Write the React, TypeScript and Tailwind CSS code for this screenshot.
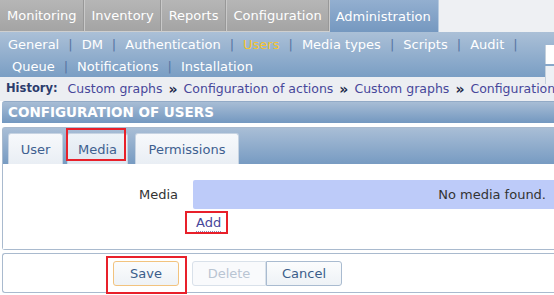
import React from "react";

const TOP = ["Monitoring", "Inventory", "Reports", "Configuration"];
const SUB1 = ["General", "DM", "Authentication", "Users", "Media types", "Scripts", "Audit"];
const SUB2 = ["Queue", "Notifications", "Installation"];
const HISTORY = ["Custom graphs", "Configuration of actions", "Custom graphs", "Configuration of users"];

export default function App() {
  return (
    <div
      className="relative w-[554px] h-[295px] overflow-hidden bg-white text-[13px] leading-none"
      style={{ fontFamily: '"DejaVu Sans", Verdana, sans-serif' }}
    >
      {/* top menu */}
      <div className="flex h-[32px] bg-[#eef0f3]">
        {TOP.map((t) => (
          <div
            key={t}
            className="flex items-center pl-[7px] pr-[6px] border-r border-r-[#c9c9c9] shadow-[inset_-1px_0_0_#989898] bg-gradient-to-b from-[#b6b6b6] to-[#a4a4a4] text-white border-b border-b-[#cfcfcf]"
          >
            <span className="pr-[1px]">{t}</span>
          </div>
        ))}
        <div className="flex items-center px-[6px] w-[109px] bg-gradient-to-b from-[#93afd0] to-[#7598c0] text-white border-r border-[#b8cbe0]">
          Administration
        </div>
      </div>

      {/* sub menu */}
      <div className="relative h-[45px] bg-gradient-to-b from-[#abc0d7] to-[#7a9ec4] text-white flex flex-col">
        <div className="flex items-center h-[24px] pl-[8px] pt-[1px]">
          {SUB1.map((t) => (
            <React.Fragment key={t}>
              <span className={t === "Users" ? "text-[#f4c430]" : ""}>{t}</span>
              <span className="px-[9px] text-[#5875a3]">|</span>
            </React.Fragment>
          ))}
        </div>
        <div className="flex items-center h-[20px] pl-[12px]">
          {SUB2.map((t, i) => (
            <React.Fragment key={t}>
              <span>{t}</span>
              {i < SUB2.length - 1 && <span className="px-[9px] text-[#5875a3]">|</span>}
            </React.Fragment>
          ))}
        </div>
        <div className="absolute left-[545px] top-[13px] w-[20px] h-[19px] bg-white border-l border-[#c4d0dc]" />
        <div className="absolute left-[545px] top-[34px] w-[20px] h-[18px] bg-[#eef1f5] border-l border-[#c4d0dc]" />
      </div>

      {/* history */}
      <div className="flex items-center h-[24px] pl-[6px] bg-[#eceef2] whitespace-nowrap text-[12px]">
        <span className="font-bold text-[11.5px] text-[#2c3c6c] mr-[10px]">History:</span>
        {HISTORY.map((h, i) => (
          <React.Fragment key={i}>
            {i > 0 && <span className="font-bold text-[14px] text-[#1e2a4a] px-[6px]">»</span>}
            <span className="text-[#47479a] text-[12.5px]">{h}</span>
          </React.Fragment>
        ))}
      </div>

      {/* header */}
      <div className="ml-[2px] h-[22px] flex items-center pl-[6px] rounded-tl-[3px] bg-gradient-to-b from-[#a8bdd5] to-[#7398c0] border-t border-[#92aac6] text-white font-bold text-[13.5px]">
        CONFIGURATION OF USERS
      </div>
      <div className="h-[4px] bg-white" />

      {/* tab box */}
      <div className="ml-[2px] border border-[#a9bace] rounded-tl-[3px] rounded-bl-[3px] border-r-0">
        <div className="flex items-end gap-[4px] h-[36px] pl-[5px] bg-gradient-to-b from-[#a9bed6] to-[#779bc2]">
          <div className="flex items-center justify-center w-[55px] h-[31px] rounded-t-[3px] border border-b-0 border-[#c6d3e2] bg-gradient-to-b from-[#f7f9fc] to-[#e9eef4] text-[#3e6090]">
            User
          </div>
          <div className="flex items-center justify-center w-[61px] h-[31px] rounded-t-[3px] border border-b-0 border-[#c6d3e2] bg-gradient-to-b from-[#eef3f8] to-[#dfe7f0] text-[#3e6090]">
            Media
          </div>
          <div className="ml-[3px] flex items-center justify-center w-[104px] h-[31px] rounded-t-[3px] border border-b-0 border-[#c6d3e2] bg-gradient-to-b from-[#f7f9fc] to-[#e9eef4] text-[#3e6090]">
            Permissions
          </div>
        </div>
        <div className="h-[85px] bg-white pt-[16px]">
          <div className="flex items-center h-[29px]">
            <div className="w-[175px] text-right text-[#333]">Media</div>
            <div className="ml-[15px] flex-1 h-[29px] flex items-center justify-end pr-[8px] bg-[#bdcbf9] rounded-l-[2px] text-[#333]">
              No media found.
            </div>
          </div>
          <div className="pl-[193px] pt-[7px]">
            <span className="text-[#47479a] border-b border-dotted border-[#8a8ab8] pb-[1px]">Add</span>
          </div>
        </div>
      </div>

      {/* footer */}
      <div className="ml-[2px] mt-[3px] h-[40px] border border-[#a9bace] border-r-0 rounded-l-[3px] flex items-center pl-[110px]">
        <button className="w-[66px] h-[25px] rounded-[3px] border border-[#f2c37e] bg-gradient-to-b from-[#fbfcfd] to-[#eef2f6] text-[#3b5d8a]">
          Save
        </button>
        <button className="ml-[13px] w-[74px] h-[25px] rounded-l-[3px] border border-[#d9e1ea] bg-[#f9fafc] text-[#b9c5d3]">
          Delete
        </button>
        <button className="w-[76px] h-[25px] rounded-r-[3px] border border-[#a9bbd0] bg-gradient-to-b from-[#fbfcfd] to-[#eef2f6] text-[#3b5d8a]">
          Cancel
        </button>
      </div>

      {/* red annotation boxes */}
      <div className="absolute left-[66px] top-[128px] w-[60px] h-[33px] border-2 border-[#e8202a]" />
      <div className="absolute left-[185px] top-[211px] w-[43px] h-[23px] border-2 border-[#e8202a]" />
      <div className="absolute left-[106px] top-[256px] w-[81px] h-[38px] border-2 border-[#e8202a]" />
    </div>
  );
}
